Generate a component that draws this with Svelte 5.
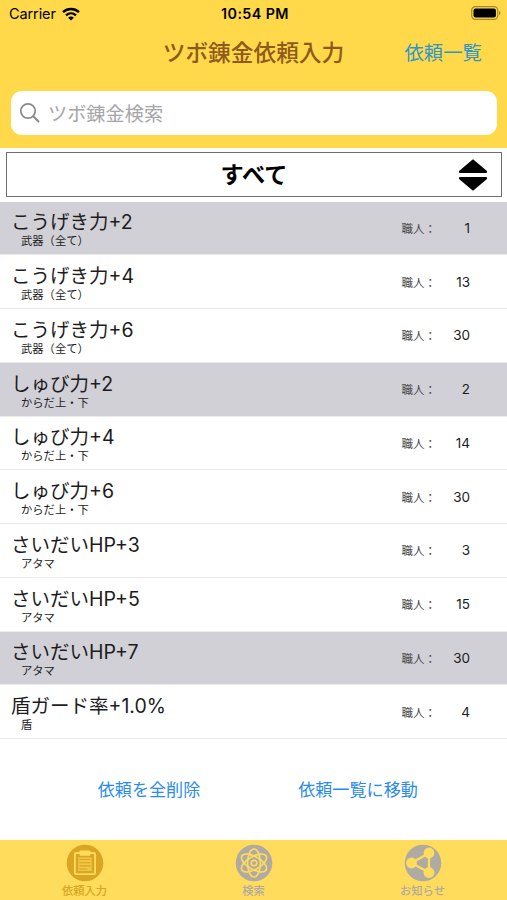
<script>
	const rows = [
		{ name: 'こうげき力+2', part: '武器（全て）', level: 1, selected: true },
		{ name: 'こうげき力+4', part: '武器（全て）', level: 13 },
		{ name: 'こうげき力+6', part: '武器（全て）', level: 30 },
		{ name: 'しゅび力+2', part: 'からだ上・下', level: 2, selected: true },
		{ name: 'しゅび力+4', part: 'からだ上・下', level: 14 },
		{ name: 'しゅび力+6', part: 'からだ上・下', level: 30 },
		{ name: 'さいだいHP+3', part: 'アタマ', level: 3 },
		{ name: 'さいだいHP+5', part: 'アタマ', level: 15 },
		{ name: 'さいだいHP+7', part: 'アタマ', level: 30, selected: true },
		{ name: '盾ガード率+1.0%', part: '盾', level: 4 }
	];

	let items = $state(rows);
	let query = $state('');
	let tab = $state('input');
</script>

<div class="screen">
	<header>
		<div class="status">
			<div class="carrier">
				<span>Carrier</span>
				<svg width="18" height="14" viewBox="0 0 18 14" aria-hidden="true">
					<path d="M1 5.1C5.5.9 12.5.9 17 5.1" fill="none" stroke="#000" stroke-width="2.4" />
					<path d="M4 8.3c2.9-2.6 7.1-2.6 10 0" fill="none" stroke="#000" stroke-width="2.3" />
					<path d="M9 13.6 6.1 10.7c1.6-1.5 4.2-1.5 5.8 0z" />
				</svg>
			</div>
			<span class="time">10:54 PM</span>
			<svg class="battery" width="30" height="15" viewBox="0 0 30 15" aria-hidden="true">
				<rect x=".7" y=".7" width="26" height="12.6" rx="3.6" fill="none" stroke="#a18a30" stroke-width="1.2" />
				<rect x="2.5" y="2.5" width="22.4" height="9" rx="2" />
				<path d="M28 4.8c2 .8 2 3.6 0 4.4z" fill="#a18a30" />
			</svg>
		</div>
		<div class="nav">
			<h1>ツボ錬金依頼入力</h1>
			<button class="nav-link">依頼一覧</button>
		</div>
		<label class="search">
			<svg width="22" height="22" viewBox="0 0 22 22" fill="none" stroke="#8a8a8e" stroke-width="1.7" stroke-linecap="round" aria-hidden="true">
				<circle cx="9" cy="9" r="7.2" />
				<path d="m14.3 14.3 5.2 5.2" stroke-width="2" />
			</svg>
			<input bind:value={query} placeholder="ツボ錬金検索" />
		</label>
	</header>

	<button class="picker">
		<span>すべて</span>
		<svg width="30" height="34" viewBox="0 0 30 34" stroke="#000" stroke-width="2" stroke-linejoin="round" aria-hidden="true">
			<path d="M15 2.4 28 13.4v.5H2v-.5z" />
			<path d="M15 31.6 28 20.6v-.5H2v.5z" />
		</svg>
	</button>

	<ul>
		{#each items as item}
			<!-- svelte-ignore a11y_click_events_have_key_events, a11y_no_noninteractive_element_interactions -->
			<li class:selected={item.selected} onclick={() => (item.selected = !item.selected)}>
				<div class="label">
					<div class="name">{item.name}</div>
					<div class="part">{item.part}</div>
				</div>
				<span class="job">職人：</span>
				<span class="level">{item.level}</span>
			</li>
		{/each}
	</ul>

	<div class="actions">
		<button onclick={() => items.forEach((i) => (i.selected = false))}>依頼を全削除</button>
		<button>依頼一覧に移動</button>
	</div>

	<nav class="tabs">
		<button class:active={tab === 'input'} onclick={() => (tab = 'input')}>
			<svg width="38" height="38" viewBox="0 0 38 38" aria-hidden="true">
				<circle cx="19" cy="19" r="18.3" fill="currentColor" />
				<rect x="8.9" y="9" width="20.2" height="21.2" rx="1.5" fill="none" stroke="#ffdc5c" stroke-width="1.8" />
				<rect x="13.5" y="6.5" width="11" height="5.3" rx="1.2" fill="#ffdc5c" />
				<rect x="12.3" y="13.4" width="13.4" height="13.6" fill="#ffdc5c" opacity=".6" />
				<path d="M13.5 15.5h11M13.5 18.7h11M13.5 21.9h11M13.5 25h8" stroke="currentColor" stroke-width="1.1" />
			</svg>
			<span>依頼入力</span>
		</button>
		<button class:active={tab === 'search'} onclick={() => (tab = 'search')}>
			<svg width="38" height="38" viewBox="0 0 38 38" aria-hidden="true">
				<circle cx="19" cy="19" r="18.3" fill="currentColor" />
				<g fill="none" stroke="#ffdc5c" stroke-width="1.6">
					<ellipse cx="19" cy="19" rx="6.4" ry="14" />
					<ellipse cx="19" cy="19" rx="6.4" ry="14" transform="rotate(60 19 19)" />
					<ellipse cx="19" cy="19" rx="6.4" ry="14" transform="rotate(120 19 19)" />
					<circle cx="19" cy="19" r="2.8" />
				</g>
			</svg>
			<span>検索</span>
		</button>
		<button class:active={tab === 'news'} onclick={() => (tab = 'news')}>
			<svg width="38" height="38" viewBox="0 0 38 38" aria-hidden="true">
				<circle cx="19" cy="19" r="18.3" fill="currentColor" />
				<path d="M7.5 19 25 9v19.5z" fill="none" stroke="#ffdc5c" stroke-width="2.3" />
				<g fill="#ffdc5c">
					<circle cx="7.5" cy="19" r="5.4" />
					<circle cx="25" cy="9" r="5.4" />
					<circle cx="25" cy="28.5" r="5.4" />
				</g>
			</svg>
			<span>お知らせ</span>
		</button>
	</nav>
</div>

<style>
	:global(body) {
		background: #fff;
	}

	.screen {
		height: 900px;
		display: flex;
		flex-direction: column;
		overflow: hidden;
		color: #1c1c1e;
		font-family: Inter, 'Noto Sans CJK JP', sans-serif;
	}

	button {
		appearance: none;
		border: none;
		background: none;
		padding: 0;
		font: inherit;
		color: inherit;
		cursor: pointer;
	}

	svg {
		display: block;
	}

	header {
		height: 147.5px;
		flex: none;
		background: #ffd94a;
	}

	.status {
		height: 27px;
		display: grid;
		grid-template-columns: 1fr auto 1fr;
		align-items: center;
		padding: 0 6px 0 9px;
		font-size: 14.5px;
		color: #000;
	}

	.carrier {
		display: flex;
		align-items: center;
		gap: 6px;
		letter-spacing: -0.1px;
	}

	.time {
		font-weight: 600;
		font-size: 14.3px;
		letter-spacing: 0.4px;
	}

	.battery {
		justify-self: end;
	}

	/* centred title, link at the right edge */
	.nav {
		height: 50px;
		display: grid;
		grid-template-columns: 1fr auto 1fr;
		align-items: center;
		padding: 0 25px;
	}

	h1 {
		grid-column: 2;
		margin: 0;
		font-size: 22.7px;
		font-weight: 500;
		line-height: 32px;
		padding-top: 2px;
		color: #8f5a1c;
	}

	.nav-link {
		justify-self: end;
		padding-bottom: 2px;
		font-size: 19.4px;
		color: #2e96c8;
	}

	.search {
		margin: 14px 10px 0 11px;
		height: 44px;
		border-radius: 11px;
		background: #fff;
		display: flex;
		align-items: center;
		padding-left: 8px;
		gap: 7px;
	}

	input {
		flex: 1;
		min-width: 0;
		border: none;
		outline: none;
		padding: 2px 0 0;
		background: transparent;
		font: inherit;
		font-size: 19.2px;
	}

	input::placeholder {
		color: #a5a5a9;
	}

	.picker {
		flex: none;
		height: 45px;
		margin: 4.5px 5px 4.5px 6px;
		border: 1px solid #6e6e6e;
		display: grid;
		grid-template-columns: 1fr auto 1fr;
		align-items: center;
		padding-right: 13px;
		font-size: 23.2px;
		font-weight: 700;
		color: #000;
	}

	.picker span {
		grid-column: 2;
		padding: 0 0 3px 13px;
	}

	.picker svg {
		justify-self: end;
	}

	ul {
		margin: 0;
		padding: 0;
		list-style: none;
	}

	li {
		box-sizing: border-box;
		height: 53.75px;
		display: flex;
		align-items: center;
		border-bottom: 1px solid #e9e9eb;
		padding: 0 37px 0 11px;
	}

	.selected {
		background: #d1d0d6;
	}

	.label {
		flex: 1;
		padding-top: 4px;
	}

	.name {
		font-size: 19.5px;
		line-height: 24px;
	}

	.part {
		padding-left: 10px;
		font-size: 11.3px;
		line-height: 15px;
	}

	.job {
		font-size: 11.5px;
		color: #48484a;
	}

	.level {
		width: 34px;
		text-align: right;
		font-size: 13.5px;
	}

	.actions {
		flex: 1;
		display: grid;
		grid-template-columns: 149px 149px;
		justify-content: center;
		column-gap: 60px;
		align-items: center;
		padding-bottom: 2px;
		font-size: 17.1px;
		color: #2a8bea;
	}

	.actions button {
		white-space: nowrap;
	}

	.tabs {
		flex: none;
		height: 60px;
		background: #ffdc5c;
		display: grid;
		grid-template-columns: repeat(3, 1fr);
	}

	.tabs button {
		display: flex;
		flex-direction: column;
		align-items: center;
		padding-top: 4px;
		font-size: 11.3px;
		font-weight: 500;
		line-height: 18px;
		color: #b0aba2;
	}

	.tabs .active {
		color: #d9a523;
	}
</style>
